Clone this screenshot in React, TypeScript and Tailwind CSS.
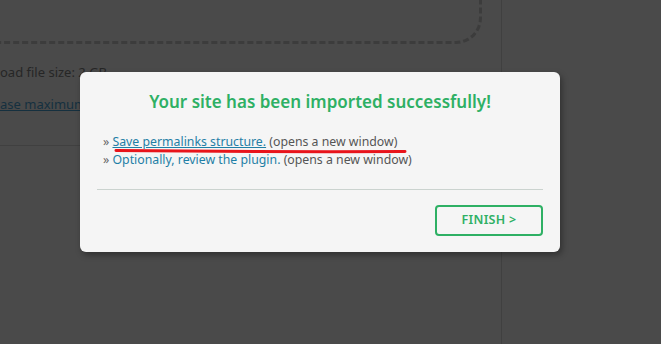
export default function App() {
  return (
    <div
      className="relative w-[661px] h-[344px] overflow-hidden bg-[#4a4a4a]"
      style={{ fontFamily: '"Noto Sans", "Open Sans", sans-serif' }}
    >
      {/* page under the overlay */}
      <div className="flex h-full">
        <div className="w-[502px] border-r border-[#404040]">
          <div className="-mt-[60px] -ml-[30px] w-[512px] h-[104px] rounded-[26px] border-[3px] border-dashed border-[#3c3c3c]"></div>
          <div className="mt-[18px] text-[13px] leading-[20px] text-[#262626] whitespace-nowrap">
            oad file size: 2 GB
          </div>
          <div className="mt-[12px] text-[13px] leading-[20px] text-[#15303f] underline whitespace-nowrap">
            ase maximum
          </div>
          <div className="mt-[31px] border-t border-[#404040]"></div>
        </div>
        <div className="flex-1"></div>
      </div>

      {/* modal */}
      <div className="absolute left-[80px] top-[72px] w-[480px] h-[180px] rounded-[6px] bg-[#f5f5f5] shadow-[2px_3px_6px_rgba(0,0,0,0.35)] flex flex-col">
        <h2 className="pt-[18px] text-center text-[17px] leading-[24px] font-semibold text-[#2eb064]">
          Your site has been imported successfully!
        </h2>
        <div className="mt-[19px] pl-[23px] text-[12.3px] leading-[18px] text-[#555]">
          <div>
            <span className="text-[#666]">» </span>
            <a className="text-[#1f7fa6] underline decoration-[#1f7fa6] underline-offset-[1px]">Save permalinks structure.</a>{" "}
            (opens a new window)
          </div>
          <div>
            <span className="text-[#666]">» </span>
            <a className="text-[#1f7fa6]">Optionally, review the plugin.</a> (opens a new window)
          </div>
        </div>
        <div className="mx-[17px] mt-[20px] border-t border-[#cbd3cf]"></div>
        <div className="flex justify-end px-[17px] mt-[15px]">
          <button className="w-[108px] h-[31px] rounded-[4px] border-2 border-[#2eb064] text-[12.5px] font-semibold tracking-[0.3px] text-[#2eb064]">
            FINISH &gt;
          </button>
        </div>
      </div>

      {/* red annotation */}
      <svg className="absolute left-[114px] top-[147px]" width="294" height="8" viewBox="0 0 294 8">
        <path d="M2 3.5 Q 140 5 291 4.5" stroke="#e8141b" strokeWidth="3" fill="none" strokeLinecap="round" />
      </svg>
    </div>
  );
}
